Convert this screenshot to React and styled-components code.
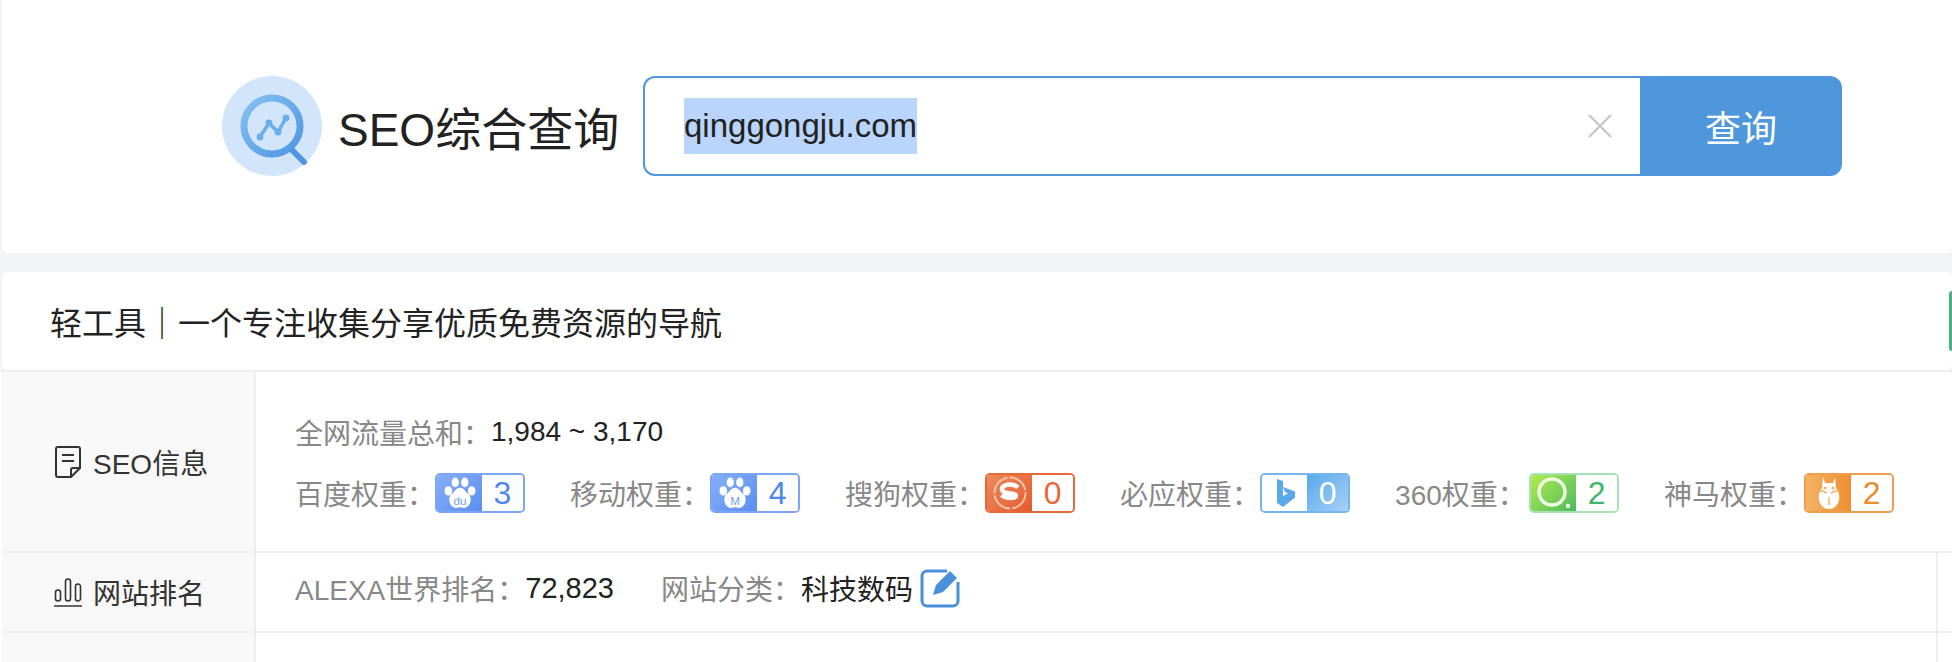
import styled, { createGlobalStyle } from 'styled-components';

const Global = createGlobalStyle`
  html, body {
    margin: 0;
    padding: 0;
    background: #fff;
    overflow: hidden;
  }
  body {
    font-family: "Liberation Sans", "Noto Sans CJK SC", sans-serif;
  }
`

const Page = styled.div`
  width: 1952px;
  height: 662px;
  overflow: hidden;
  background: #f2f4f7;
`

const SearchCard = styled.div`
  height: 253px;
  margin-left: 2px;
  background: #fff;
  border-radius: 0 0 6px 6px;
  padding: 76px 0 0 220px;
  box-sizing: border-box;
  display: flex;
`

const Brand = styled.div`
  display: flex;
  align-items: center;
  width: 421px;
  height: 100px;
`

const Logo = styled.svg`
  width: 100px;
  height: 100px;
  flex: none;
  margin-right: 16px;
`

const BrandName = styled.span`
  font-size: 46px;
  color: #222;
  white-space: nowrap;
`

const SearchBox = styled.div`
  display: flex;
  width: 1199px;
  height: 100px;
`

const InputWrap = styled.div`
  flex: 1;
  display: flex;
  align-items: center;
  justify-content: space-between;
  border: 2px solid #4f97dd;
  border-right: none;
  border-radius: 12px 0 0 12px;
  padding: 0 28px 0 39px;
`

const Selected = styled.span`
  background: #b9d5fb;
  color: #222;
  font-size: 33px;
  line-height: 56px;
`

const ClearIcon = styled.svg`
  width: 24px;
  height: 24px;
`

const SearchButton = styled.button`
  width: 202px;
  border: none;
  border-radius: 0 12px 12px 0;
  background: #4f97dd;
  color: #fff;
  font-family: inherit;
  font-size: 36px;
  padding: 0;
`

const SiteBar = styled.div`
  height: 98px;
  margin: 19px 0 0 2px;
  background: #fff;
  border-radius: 6px;
  display: flex;
  align-items: center;
  justify-content: space-between;
  padding-left: 48px;
  font-size: 32px;
  color: #222;
`

const Tag = styled.div`
  width: 3px;
  height: 60px;
  background: #4caf7d;
  border-radius: 4px 0 0 4px;
`

const Table = styled.div`
  background: #fff;
  border-top: 2px solid #eee;
  padding-left: 2px;
`

const Row = styled.div`
  display: flex;
  height: ${({h}) => h}px;
  border-bottom: 2px solid #eee;
`

const Side = styled.div`
  width: 254px;
  flex: none;
  background: #f8f8f8;
  border-right: 2px solid #eee;
  display: flex;
  align-items: center;
  padding-left: 50px;
  box-sizing: border-box;
  font-size: 28px;
  color: #333;
`

const SideIcon = styled.svg`
  width: 32px;
  height: 32px;
  margin-right: 9px;
  flex: none;
`

const Body = styled.div`
  flex: 1;
  padding-left: 39px;
  margin-right: 13px;
  font-size: 28px;
`

const Line = styled.div`
  display: flex;
  align-items: center;
  margin-top: ${({top}) => top}px;
`

const Label = styled.span`
  color: #888;
  white-space: nowrap;
`

const Value = styled.span`
  color: #222;
  white-space: nowrap;
  font-size: ${({size}) => size || 28}px;
  margin-right: ${({gap}) => gap || 0}px;
`

const RankItem = styled.div`
  display: flex;
  align-items: center;
  margin-right: 45px;
`

const WideLabel = styled(Label)`
  width: 134px;
`

const Badge = styled.div`
  display: flex;
  width: 90px;
  height: 40px;
  border: 2px solid ${({color}) => color};
  border-radius: 5px;
  box-sizing: border-box;
  overflow: hidden;
`

const BadgeLogo = styled.div`
  width: 45px;
  flex: none;
  display: flex;
  align-items: center;
  justify-content: center;
  background: ${({color}) => color};
`

const BadgeNum = styled.div`
  flex: 1;
  text-align: center;
  font-size: 32px;
  line-height: 36px;
  color: ${({color}) => color};
  background: ${({fill}) => fill || '#fff'};
`

const EditIcon = styled.svg`
  width: 40px;
  height: 40px;
  margin-left: 7px;
`

const EdgeLine = styled.div`
  width: 2px;
  flex: none;
  margin-right: 14px;
  background: ${({hidden}) => hidden ? 'transparent' : '#eee'};
`

const Paw = ({label}) => (
  <svg width="36" height="34" viewBox="0 0 32 32">
    <g fill="#fff">
      <ellipse cx="5" cy="14" rx="3.6" ry="4.4" />
      <ellipse cx="11.5" cy="6" rx="3.4" ry="4.6" />
      <ellipse cx="20.5" cy="6" rx="3.4" ry="4.6" />
      <ellipse cx="27" cy="14" rx="3.6" ry="4.4" />
      <path d="M16 11c4 0 5 4 8 6 4 3 2 13-4 13-2 0-3-.6-4-.6s-2 .6-4 .6c-6 0-8-10-4-13 3-2 4-6 8-6z" />
    </g>
    <text x="16" y="27" textAnchor="middle" fontSize="11" fontFamily="Liberation Sans" fill="#6f9df2">{label}</text>
  </svg>
)

const SogouLogo = () => (
  <svg width="36" height="36" viewBox="0 0 36 36">
    <circle cx="18" cy="18" r="15.5" fill="none" stroke="#f7c3a8" strokeWidth="2" strokeDasharray="22 2" />
    <path d="M26 12.5c-2-2-5-3-8-3-4 0-8 1.6-8 4.6 0 6 14 3 14 6.4 0 2-3 2.6-6 2.6-3 0-6-1-8.500-3" fill="none" stroke="#fff" strokeWidth="4.500" />
  </svg>
)

const BingLogo = () => (
  <svg width="22" height="30" viewBox="0 0 22 30">
    <path d="M3 1l6 2v15l5-2.600-3-1.400-2-5 12 4.500v6L9 29l-6-4z" fill="#5aa9ea" />
  </svg>
)

const Logo360 = () => (
  <svg width="38" height="36" viewBox="0 0 38 36">
    <circle cx="17" cy="17" r="13" fill="none" stroke="#eefae4" strokeWidth="3.500" />
    <circle cx="33" cy="31" r="2.200" fill="#eefae4" />
  </svg>
)

const ShenmaLogo = () => (
  <svg width="24" height="34" viewBox="0 0 24 34">
    <path d="M6 1l2 6h8l2-6 1 11c4 5 4 11 2 15-2 4-5 6-9 6s-7-2-9-6c-2-4-2-10 2-15z" fill="#fff" />
    <path d="M3 14l7 3M21 14l-7 3M12 21v8" stroke="#f3b066" strokeWidth="1.500" fill="none" />
    <circle cx="8" cy="12" r="1.600" fill="#f3b066" />
    <circle cx="16" cy="12" r="1.600" fill="#f3b066" />
  </svg>
)

const ranks = [
  {name: '百度权重：', border: '#7ba6f6', bg: 'linear-gradient(135deg,#86aef8,#5a8ff0)', num: '3', color: '#4f86ee', logo: <Paw label="du" />},
  {name: '移动权重：', border: '#7ba6f6', bg: 'linear-gradient(135deg,#86aef8,#5a8ff0)', num: '4', color: '#4f86ee', logo: <Paw label="M" />},
  {name: '搜狗权重：', border: '#e8683a', bg: 'linear-gradient(135deg,#ee8a5c,#e55b2e)', num: '0', color: '#e8683a', logo: <SogouLogo />},
  {name: '必应权重：', border: '#72b5ef', bg: '#fff', num: '0', color: '#fff', fill: 'linear-gradient(135deg,#5aa9ea,#a5d0f5)', logo: <BingLogo />},
  {name: '360权重：', wide: true, border: '#a6e2b8', bg: 'linear-gradient(135deg,#b1ec4c,#4dbb5f)', num: '2', color: '#3fb56a', logo: <Logo360 />},
  {name: '神马权重：', border: '#ee9f4e', bg: 'linear-gradient(90deg,#f4b264,#ee8f2f)', num: '2', color: '#e88c2e', logo: <ShenmaLogo />},
]

const App = () => (
  <Page>
    <Global />
    <SearchCard>
      <Brand>
        <Logo viewBox="0 0 100 100">
          <defs>
            <linearGradient id="lens" x1="0" y1="0" x2="1" y2="1">
              <stop offset="0" stopColor="#84c0f0" />
              <stop offset="1" stopColor="#4f97e5" />
            </linearGradient>
          </defs>
          <circle cx="50" cy="50" r="50" fill="#d2e5fb" />
          <circle cx="50" cy="50" r="28" fill="none" stroke="url(#lens)" strokeWidth="7" />
          <path d="M71 75l11 11" stroke="#4f97e5" strokeWidth="6" strokeLinecap="round" />
          <path d="M38 61l9-14 9 9 8-14" fill="none" stroke="#6aaeea" strokeWidth="3.500" strokeLinejoin="round" />
          <circle cx="38" cy="61" r="3.400" fill="#6aaeea" />
          <circle cx="47" cy="47" r="3.400" fill="#6aaeea" />
          <circle cx="56" cy="56" r="3.400" fill="#6aaeea" />
          <circle cx="64" cy="42" r="3.400" fill="#6aaeea" />
        </Logo>
        <BrandName>SEO综合查询</BrandName>
      </Brand>
      <SearchBox>
        <InputWrap>
          <Selected>qinggongju.com</Selected>
          <ClearIcon viewBox="0 0 24 24">
            <path d="M1 1l22 22M23 1L1 23" stroke="#c8c8c8" strokeWidth="2.400" />
          </ClearIcon>
        </InputWrap>
        <SearchButton>查询</SearchButton>
      </SearchBox>
    </SearchCard>
    <SiteBar>
      <span>轻工具｜一个专注收集分享优质免费资源的导航</span>
      <Tag />
    </SiteBar>
    <Table>
      <Row h={179}>
        <Side>
          <SideIcon viewBox="0 0 32 32">
            <path d="M6 1h20a2 2 0 0 1 2 2v19l-9 9H6a2 2 0 0 1-2-2V3a2 2 0 0 1 2-2zM28 22h-7a2 2 0 0 0-2 2v7M10 9h12M10 15h12" fill="none" stroke="#333" strokeWidth="2" />
          </SideIcon>
          SEO信息
        </Side>
        <Body>
          <Line top={40}>
            <Label>全网流量总和：</Label>
            <Value>1,984 ~ 3,170</Value>
          </Line>
          <Line top={21}>
            {ranks.map(r => (
              <RankItem key={r.name}>
                {r.wide ? <WideLabel>{r.name}</WideLabel> : <Label>{r.name}</Label>}
                <Badge color={r.border}>
                  <BadgeLogo color={r.bg}>{r.logo}</BadgeLogo>
                  <BadgeNum color={r.color} fill={r.fill}>{r.num}</BadgeNum>
                </Badge>
              </RankItem>
            ))}
          </Line>
        </Body>
        <EdgeLine />
      </Row>
      <Row h={78}>
        <Side>
          <SideIcon viewBox="0 0 32 32">
            <path d="M2 30h28M6 25a2.500 2.500 0 0 1-2.500-2.500v-6a2.500 2.500 0 0 1 5 0v6A2.500 2.500 0 0 1 6 25zM16 25a2.500 2.500 0 0 1-2.500-2.500v-17a2.500 2.500 0 0 1 5 0v17A2.500 2.500 0 0 1 16 25zM26 25a2.500 2.500 0 0 1-2.500-2.500v-12a2.500 2.500 0 0 1 5 0v12A2.500 2.500 0 0 1 26 25z" fill="none" stroke="#333" strokeWidth="1.600" />
          </SideIcon>
          网站排名
        </Side>
        <Body>
          <Line top={15}>
            <Label>ALEXA世界排名：</Label>
            <Value size={29} gap={47}>72,823</Value>
            <Label>网站分类：</Label>
            <Value>科技数码</Value>
            <EditIcon viewBox="0 0 40 40">
              <path d="M27 3H7a5 5 0 0 0-5 5v25a5 5 0 0 0 5 5h26a5 5 0 0 0 5-5V14" fill="none" stroke="#4a8fd9" strokeWidth="3" />
              <path d="M13 27l3-10L30 3l7 7-14 14z" fill="#4a8fd9" />
            </EditIcon>
          </Line>
        </Body>
        <EdgeLine />
      </Row>
      <Row h={40}>
        <Side />
        <Body />
        <EdgeLine />
      </Row>
    </Table>
  </Page>
)

export default App;
